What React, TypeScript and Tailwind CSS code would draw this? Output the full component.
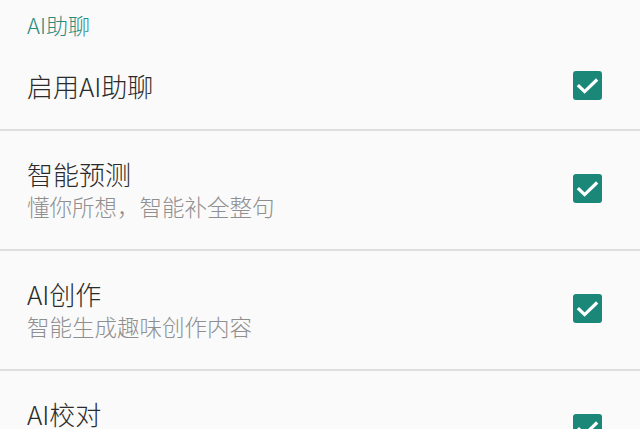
import React from "react";

const font = { fontFamily: '"Noto Sans CJK SC", "Noto Sans", sans-serif' };

function Check({ cls }: { cls: string }) {
  return (
    <div className={`w-[29px] h-[29px] rounded-[3px] bg-[#1a8778] flex items-center justify-center shrink-0 ${cls}`}>
      <svg width="29" height="29" viewBox="0 0 29 29">
        <path d="M6 15.2 L11.6 20.6 L23 9.6" fill="none" stroke="#ffffff" strokeWidth="3.2" strokeLinecap="square" />
      </svg>
    </div>
  );
}

function Row({ title, sub }: { title: string; sub?: string }) {
  return (
    <>
      <div className="flex items-center justify-between pl-[27px] pr-[38px] h-[118px]">
        <div className="flex flex-col mt-[-1px]">
          <div className="text-[26px] leading-[33px] text-[#2b2b2b] font-light">{title}</div>
          {sub && <div className="text-[22.5px] leading-[33px] text-[#8f8f8f] font-light">{sub}</div>}
        </div>
        <Check cls="mb-[3px]" />
      </div>
      <div className="h-[2px] bg-[#dedede]" />
    </>
  );
}

export default function App() {
  return (
    <div className="w-[640px] h-[429px] overflow-hidden bg-[#fafafa]" style={font}>
      <div className="h-[48px] flex items-center pl-[27px] text-[22px] text-[#2a8c7f] font-light mb-[1px]">AI助聊</div>
      <div className="flex items-center justify-between pl-[27px] pr-[38px] h-[80px] pb-[6px]">
        <div className="text-[26px] leading-[33px] text-[#2b2b2b] font-light mt-[-1px]">启用AI助聊</div>
        <Check cls="mb-[1px]" />
      </div>
      <div className="h-[2px] bg-[#dedede]" />
      <Row title="智能预测" sub="懂你所想，智能补全整句" />
      <Row title="AI创作" sub="智能生成趣味创作内容" />
      <Row title="AI校对" sub="智能校对输入内容" />
    </div>
  );
}
